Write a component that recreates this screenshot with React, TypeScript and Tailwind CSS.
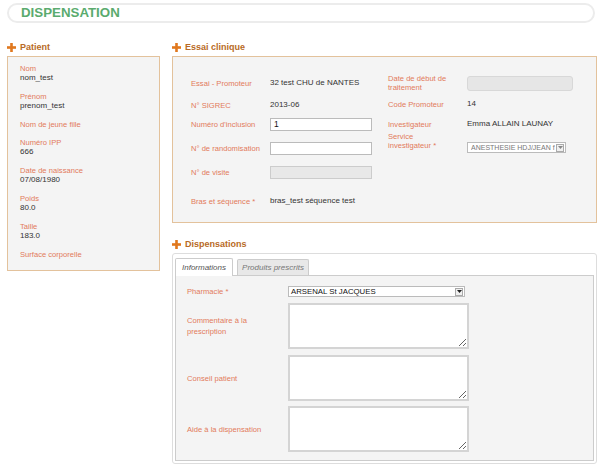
import React from 'react';

const label = 'text-[7.6px] leading-[9px] text-[#e27a5b]';
const value = 'text-[8px] leading-[10px] text-[#333]';

const Plus: React.FC = () => (
  <svg width="9" height="9" viewBox="0 0 9 9" className="shrink-0">
    <rect x="3.2" y="0" width="2.6" height="9" fill="#e0781e" />
    <rect x="0" y="3.2" width="9" height="2.6" fill="#e0781e" />
  </svg>
);

const Heading: React.FC<{ title: string }> = ({ title }) => (
  <div className="flex items-center gap-[4px] h-[12px]">
    <Plus />
    <span className="text-[9px] font-bold text-[#b86a26] leading-none">{title}</span>
  </div>
);

const Arrow: React.FC<{ dark?: boolean }> = ({ dark }) => (
  <div className="w-[8px] h-[8px] shrink-0 border border-[#aaa] bg-[#f0f0f0] flex items-center justify-center">
    <svg width="5" height="3" viewBox="0 0 5 3">
      <path d="M0 0 L5 0 L2.5 3 Z" fill={dark ? '#222' : '#888'} />
    </svg>
  </div>
);

const PatientField: React.FC<{ name: string; val?: string }> = ({ name, val }) => (
  <div className="flex flex-col mb-[9px]">
    <span className={label}>{name}</span>
    {val && <span className={value}>{val}</span>}
  </div>
);

const Textarea: React.FC = () => (
  <textarea className="w-[181px] h-[46px] bg-white border-2 border-[#d4d4d4] resize-y block" />
);

export default function App() {
  return (
    <div className="w-[605px] h-[470px] bg-white overflow-hidden pl-[7px] pt-[3px]" style={{ fontFamily: '"Liberation Sans", Arial, sans-serif' }}>
      <div className="w-[588px] h-[20px] rounded-full border-2 border-[#ececec] flex items-center pl-[12px]">
        <span className="text-[13.3px] font-bold text-[#5aab6e] leading-none">DISPENSATION</span>
      </div>

      <div className="flex gap-[12px] mt-[18px]">
        {/* Patient */}
        <div className="w-[153px] flex flex-col">
          <Heading title="Patient" />
          <div className="mt-[3px] h-[215px] border border-[#e3c29c] bg-[#f4f4f4] pl-[12px] pt-[7px]">
            <PatientField name="Nom" val="nom_test" />
            <PatientField name="Prénom" val="prenom_test" />
            <PatientField name="Nom de jeune fille" />
            <PatientField name="Numéro IPP" val="666" />
            <PatientField name="Date de naissance" val="07/08/1980" />
            <PatientField name="Poids" val="80.0" />
            <PatientField name="Taille" val="183.0" />
            <PatientField name="Surface corporelle" />
          </div>
        </div>

        {/* Right column */}
        <div className="w-[425px] flex flex-col">
          <Heading title="Essai clinique" />
          <div className="mt-[3px] h-[167px] border border-[#e3c29c] bg-[#f4f4f4] flex pl-[18px] pt-[16px]">
            <div className="w-[197px] flex flex-col">
              <div className="flex items-center h-[14px] mt-[3px]">
                <span className={`${label} w-[79px]`}>Essai - Promoteur</span>
                <span className={value}>32 test CHU de NANTES</span>
              </div>
              <div className="flex items-center h-[14px] mt-[8px]">
                <span className={`${label} w-[79px]`}>N° SIGREC</span>
                <span className={value}>2013-06</span>
              </div>
              <div className="flex items-center h-[14px] mt-[5px]">
                <span className={`${label} w-[79px]`}>Numéro d'inclusion</span>
                <input defaultValue="1" className="w-[102px] h-[13px] bg-white border border-[#bbb] text-[8.5px] text-[#111] px-[3px] outline-none" />
              </div>
              <div className="flex items-center h-[14px] mt-[10px]">
                <span className={`${label} w-[79px] whitespace-nowrap`}>N° de randomisation</span>
                <input className="w-[102px] h-[13px] bg-white border border-[#bbb] text-[8.5px] px-[3px] outline-none" />
              </div>
              <div className="flex items-center h-[14px] mt-[10px]">
                <span className={`${label} w-[79px]`}>N° de visite</span>
                <div className="w-[102px] h-[13px] bg-[#e8e8e8] border border-[#ccc]" />
              </div>
              <div className="flex items-center h-[14px] mt-[15px]">
                <span className={`${label} w-[79px]`}>Bras et séquence *</span>
                <span className={value}>bras_test séquence test</span>
              </div>
            </div>

            <div className="flex flex-col">
              <div className="flex items-center h-[16px] mt-[2px]">
                <span className={`${label} w-[79px]`}>Date de début de<br />traitement</span>
                <div className="w-[106px] h-[15px] rounded-[3px] bg-[#e6e6e6] border border-[#d8d8d8]" />
              </div>
              <div className="flex items-center h-[14px] mt-[6px]">
                <span className={`${label} w-[79px]`}>Code Promoteur</span>
                <span className={value}>14</span>
              </div>
              <div className="flex items-center h-[14px] mt-[6px]">
                <span className={`${label} w-[79px]`}>Investigateur</span>
                <span className={value}>Emma ALLAIN LAUNAY</span>
              </div>
              <div className="flex items-start mt-[1px]">
                <span className={`${label} w-[79px]`}>Service<br />investigateur *</span>
                <div className="mt-[10px] w-[99px] h-[11px] bg-white border border-[#bbb] flex items-center justify-between pl-[3px] pr-[1px] gap-[1px]">
                  <span className="text-[7px] leading-none text-[#777] whitespace-nowrap overflow-hidden">ANESTHESIE HDJ/JEAN f</span>
                  <Arrow />
                </div>
              </div>
            </div>
          </div>

          <div className="mt-[15px]">
            <Heading title="Dispensations" />
          </div>
          <div className="mt-[3px] h-[211px] border border-[#ddd] rounded-[3px] bg-white p-[2px] flex flex-col">
            <div className="flex items-end gap-[4px] h-[19px] pt-[1px]">
              <div className="h-[18px] w-[58px] bg-white border border-[#ccc] border-b-0 rounded-t-[2px] flex items-center justify-center -mb-[1px] relative z-10">
                <span className="text-[8px] italic text-[#555]">Informations</span>
              </div>
              <div className="h-[16px] w-[72px] bg-[#e8e8e8] border border-[#ccc] border-b-0 rounded-t-[2px] flex items-center justify-center">
                <span className="text-[8px] italic text-[#777]">Produits prescrits</span>
              </div>
            </div>
            <div className="flex-1 border border-[#ccc] bg-[#f4f4f4] pl-[11px] pt-[10px] flex flex-col">
              <div className="flex items-center h-[11px]">
                <span className={`${label} w-[101px]`}>Pharmacie *</span>
                <div className="w-[177px] h-[11px] bg-white border border-[#bbb] flex items-center justify-between pl-[2px] pr-[1px]">
                  <span className="text-[7.8px] leading-none text-[#111]">ARSENAL St JACQUES</span>
                  <Arrow dark />
                </div>
              </div>
              <div className="flex items-center mt-[6px]">
                <span className={`${label} w-[101px] leading-[11px]`}>Commentaire à la<br />prescription</span>
                <Textarea />
              </div>
              <div className="flex items-center mt-[6px]">
                <span className={`${label} w-[101px]`}>Conseil patient</span>
                <Textarea />
              </div>
              <div className="flex items-center mt-[5px]">
                <span className={`${label} w-[101px]`}>Aide à la dispensation</span>
                <Textarea />
              </div>
            </div>
          </div>
        </div>
      </div>
    </div>
  );
}
